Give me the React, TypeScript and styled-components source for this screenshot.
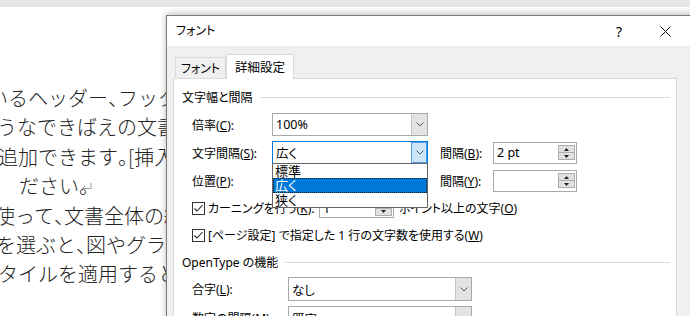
import React from 'react';
import styled, { createGlobalStyle } from 'styled-components';

const GlobalStyle = createGlobalStyle`
  html, body {
    margin: 0;
    padding: 0;
    background: #ffffff;
  }
  body {
    font-family: "Noto Sans", "Noto Sans CJK JP", sans-serif;
  }
`;

const Screen = styled.div`
  position: relative;
  width: 690px;
  height: 316px;
  overflow: hidden;
  background: #ffffff;
`;

const RulerStrip = styled.div`
  height: 7px;
  background: #e6e6e6;
`;

// Word document behind the dialog
const Page = styled.div`
  padding-top: 76px;
  font-family: "Noto Sans CJK JP", sans-serif;
  font-weight: 300;
  font-size: 20px;
  line-height: 29.4px;
  color: #222222;
  white-space: nowrap;
`;

const Line = styled.div<{ $shift: number }>`
  margin-left: ${({ $shift }) => $shift}px;
  display: flex;
  align-items: center;
`;

// Word squeezes 、 and 。 to half width
const Punct = styled.span`
  display: inline-block;
  width: 10px;
  overflow: visible;
`;

const ReturnMark = styled.svg`
  margin-left: -8px;
  margin-top: 4px;
`;

// Dialog
const Dialog = styled.div`
  position: absolute;
  left: 166px;
  top: 15px;
  width: 530px;
  height: 330px;
  border: 1px solid #7a7a7a;
  background: #f0f0f0;
  box-shadow: 0 -3px 8px rgba(0, 0, 0, 0.12), 0 0 6px rgba(0, 0, 0, 0.15);
  font-family: "Noto Sans", "Noto Sans CJK JP", sans-serif;
  font-size: 12px;
  color: #000000;
  font-feature-settings: "palt";
`;

const TitleBar = styled.div`
  height: 30px;
  display: flex;
  align-items: center;
  padding-left: 9px;
  background: #ffffff;
`;

const TitleText = styled.div`
  flex: 1;
  line-height: 16px;
`;

const TitleButton = styled.div`
  width: 46px;
  height: 30px;
  display: flex;
  align-items: center;
  justify-content: center;
  font-size: 14px;
`;

const TitleButtons = styled.div`
  display: flex;
  padding-right: 9px;
`;

const DialogBody = styled.div`
  padding: 8px 0 0 6px;
`;

const TabStrip = styled.div`
  position: relative;
  z-index: 1;
  height: 25px;
  display: flex;
  align-items: flex-end;
  padding-left: 2px;
  margin-bottom: -1px;
`;

const Tab = styled.div<{ $active?: boolean; $width: number }>`
  width: ${({ $width }) => $width}px;
  height: ${({ $active }) => ($active ? 25 : 21)}px;
  margin-bottom: ${({ $active }) => ($active ? 0 : 1)}px;
  box-sizing: border-box;
  border: 1px solid #d9d9d9;
  border-bottom: none;
  background: ${({ $active }) => ($active ? '#ffffff' : '#f0f0f0')};
  display: flex;
  align-items: center;
  justify-content: center;
  padding-bottom: ${({ $active }) => ($active ? 2 : 0)}px;
  font-size: ${({ $active }) => ($active ? 12.5 : 12)}px;
`;

const TabPanel = styled.div`
  width: 504px;
  height: 260px;
  box-sizing: border-box;
  border: 1px solid #d9d9d9;
  background: #ffffff;
  padding: 10px 6px 0 8px;
`;

const SectionHeader = styled.div<{ $gap: number }>`
  display: flex;
  align-items: center;
  height: 16px;
  margin-top: ${({ $gap }) => $gap}px;
  gap: 7px;

  &::after {
    content: '';
    flex: 1;
    height: 1px;
    background: #dcdcdc;
  }
`;

const Fields = styled.div<{ $gap: number }>`
  display: flex;
  flex-direction: column;
  gap: 5px;
  padding-left: 10px;
  margin-top: ${({ $gap }) => $gap}px;
`;

const Row = styled.div<{ $height?: number }>`
  display: flex;
  align-items: center;
  height: ${({ $height }) => $height ?? 23}px;
`;

const Label = styled.div<{ $width: number; $indent?: number }>`
  width: ${({ $width }) => $width}px;
  margin-left: ${({ $indent }) => $indent ?? 0}px;
  white-space: nowrap;
`;

const ComboWrap = styled.div`
  position: relative;
`;

const Combo = styled.div<{ $width: number; $focused?: boolean; $height?: number }>`
  width: ${({ $width }) => $width}px;
  height: ${({ $height }) => $height ?? 23}px;
  box-sizing: border-box;
  border: 1px solid ${({ $focused }) => ($focused ? '#0078d7' : '#a9a9a9')};
  background: #ffffff;
  display: flex;
`;

const ComboText = styled.div`
  flex: 1;
  padding-left: 3px;
  display: flex;
  align-items: center;
  font-size: 12.5px;
`;

const DropButton = styled.div<{ $focused?: boolean }>`
  width: 16px;
  box-sizing: border-box;
  border-left: 1px solid ${({ $focused }) => ($focused ? '#569de5' : '#c4c4c4')};
  background: ${({ $focused }) => ($focused ? '#cce4f7' : '#e3e3e3')};
  display: flex;
  align-items: center;
  justify-content: center;
  ${({ $focused }) => ($focused ? 'outline: 1px solid #569de5; outline-offset: -1px;' : '')}
`;

const DropList = styled.div`
  position: absolute;
  top: 100%;
  left: 0;
  width: 100%;
  margin-top: -1px;
  z-index: 3;
  box-sizing: border-box;
  border: 1px solid #646464;
  background: #ffffff;
`;

const ListItem = styled.div<{ $selected?: boolean }>`
  height: 14.4px;
  line-height: 14px;
  padding-left: 2px;
  font-size: 13px;
  color: ${({ $selected }) => ($selected ? '#ffffff' : '#000000')};
  background: ${({ $selected }) => ($selected ? '#0078d7' : 'transparent')};
  ${({ $selected }) => ($selected ? 'outline: 1px dotted #1a1a1a; outline-offset: -1px;' : '')}
`;

const SpinBox = styled.div<{ $width: number; $height?: number }>`
  width: ${({ $width }) => $width}px;
  height: ${({ $height }) => $height ?? 22}px;
  box-sizing: border-box;
  border: 1px solid #a9a9a9;
  background: #ffffff;
  display: flex;
`;

const SpinArrows = styled.div`
  width: 17px;
  margin: 1px 1px 1px 0;
  display: flex;
  flex-direction: column;
  justify-content: center;
`;

const SpinArrow = styled.div`
  height: 8px;
  box-sizing: border-box;
  border: 1px solid #adadad;
  background: #e1e1e1;
  display: flex;
  align-items: center;
  justify-content: center;

  & + & {
    margin-top: -1px;
  }
`;

const CheckBox = styled.div`
  width: 13px;
  height: 13px;
  box-sizing: border-box;
  border: 1px solid #333333;
  background: #ffffff;
  display: flex;
  align-items: center;
  justify-content: center;
  margin-right: 3px;
`;

const Hint = styled.div`
  margin-left: 5px;
  white-space: nowrap;
`;

const Chevron = () => (
  <svg width="8" height="5" viewBox="0 0 8 5">
    <polyline points="0.5,0.5 4,4 7.5,0.5" fill="none" stroke="#5a5a5a" strokeWidth="1" />
  </svg>
);

const Tri = ({ up }: { up?: boolean }) => (
  <svg width="5" height="3" viewBox="0 0 5 3">
    <polygon points={up ? '0,3 2.5,0 5,3' : '0,0 2.5,3 5,0'} fill="#222" />
  </svg>
);

const Spinner = ({ width, value, height }: { width: number; value?: string; height?: number }) => (
  <SpinBox $width={width} $height={height}>
    <ComboText>{value}</ComboText>
    <SpinArrows>
      <SpinArrow>
        <Tri up />
      </SpinArrow>
      <SpinArrow>
        <Tri />
      </SpinArrow>
    </SpinArrows>
  </SpinBox>
);

const Check = () => (
  <CheckBox>
    <svg width="11" height="11" viewBox="0 0 11 11">
      <polyline points="1.5,5.5 4,8 9.5,2" fill="none" stroke="#222" strokeWidth="1.1" />
    </svg>
  </CheckBox>
);

const DocLines = [
  { text: 'いるヘッダー、フッター、表紙、テキスト', shift: -12 },
  { text: 'うなできばえの文書を作成できます。', shift: -3 },
  { text: '追加できます。[挿入] をクリックしてから', shift: -2 },
  { text: 'ださい。', shift: 19, mark: true },
  { text: '使って、文書全体の統一感を出すこと', shift: -5 },
  { text: 'を選ぶと、図やグラフ、SmartArt', shift: -4 },
  { text: 'タイルを適用すると、見出しが変わ', shift: -2 },
];

const renderDocText = (text: string) =>
  text.split(/([、。])/).map((part, i) =>
    part === '、' || part === '。' ? <Punct key={i}>{part}</Punct> : <span key={i}>{part}</span>
  );

const App = () => {
  return (
    <Screen>
      <GlobalStyle />
      <RulerStrip />
      <Page>
        {DocLines.map(({ text, shift, mark }) => (
          <Line key={text} $shift={shift}>
            {renderDocText(text)}
            {mark && (
              <ReturnMark width="11" height="9" viewBox="0 0 11 9">
                <path d="M10 0 V5.5 H1.5 M4 3 L1.5 5.5 L4 8" fill="none" stroke="#9d9d9d" strokeWidth="1" />
              </ReturnMark>
            )}
          </Line>
        ))}
      </Page>

      <Dialog>
        <TitleBar>
          <TitleText>フォント</TitleText>
          <TitleButtons>
            <TitleButton>?</TitleButton>
            <TitleButton>
              <svg width="11" height="11" viewBox="0 0 11 11">
                <path d="M0.5 0.5 L10.5 10.5 M10.5 0.5 L0.5 10.5" stroke="#111" strokeWidth="1" />
              </svg>
            </TitleButton>
          </TitleButtons>
        </TitleBar>

        <DialogBody>
          <TabStrip>
            <Tab $width={51}>フォント</Tab>
            <Tab $width={68} $active>
              詳細設定
            </Tab>
          </TabStrip>

          <TabPanel>
            <SectionHeader $gap={0}>文字幅と間隔</SectionHeader>
            <Fields $gap={8}>
              <Row>
                <Label $width={80}>
                  倍率(<u>C</u>):
                </Label>
                <Combo $width={156}>
                  <ComboText>100%</ComboText>
                  <DropButton>
                    <Chevron />
                  </DropButton>
                </Combo>
              </Row>
              <Row>
                <Label $width={80}>
                  文字間隔(<u>S</u>):
                </Label>
                <ComboWrap>
                  <Combo $width={156} $focused>
                    <ComboText>広く</ComboText>
                    <DropButton $focused>
                      <Chevron />
                    </DropButton>
                  </Combo>
                  <DropList>
                    <ListItem>標準</ListItem>
                    <ListItem $selected>広く</ListItem>
                    <ListItem>狭く</ListItem>
                  </DropList>
                </ComboWrap>
                <Label $width={53} $indent={12}>
                  間隔(<u>B</u>):
                </Label>
                <Spinner width={84} value="2 pt" />
              </Row>
              <Row>
                <Label $width={80}>
                  位置(<u>P</u>):
                </Label>
                <Combo $width={156}>
                  <ComboText>標準</ComboText>
                  <DropButton>
                    <Chevron />
                  </DropButton>
                </Combo>
                <Label $width={53} $indent={12}>
                  間隔(<u>Y</u>):
                </Label>
                <Spinner width={84} />
              </Row>
              <Row $height={22}>
                <Check />
                <Label $width={111}>
                  カーニングを行う(<u>K</u>):
                </Label>
                <Spinner width={75} value="1" height={20} />
                <Hint>
                  ポイント以上の文字(<u>O</u>)
                </Hint>
              </Row>
              <Row $height={22}>
                <Check />
                <Label $width={300}>
                  [ページ設定] で指定した 1 行の文字数を使用する(<u>W</u>)
                </Label>
              </Row>
            </Fields>

            <SectionHeader $gap={8}>OpenType の機能</SectionHeader>
            <Fields $gap={7}>
              <Row $height={24}>
                <Label $width={96}>
                  合字(<u>L</u>):
                </Label>
                <Combo $width={184} $height={24}>
                  <ComboText>なし</ComboText>
                  <DropButton>
                    <Chevron />
                  </DropButton>
                </Combo>
              </Row>
              <Row $height={24}>
                <Label $width={96}>
                  数字の間隔(<u>M</u>):
                </Label>
                <Combo $width={184} $height={24}>
                  <ComboText>既定</ComboText>
                  <DropButton>
                    <Chevron />
                  </DropButton>
                </Combo>
              </Row>
            </Fields>
          </TabPanel>
        </DialogBody>
      </Dialog>
    </Screen>
  );
};

export default App;
